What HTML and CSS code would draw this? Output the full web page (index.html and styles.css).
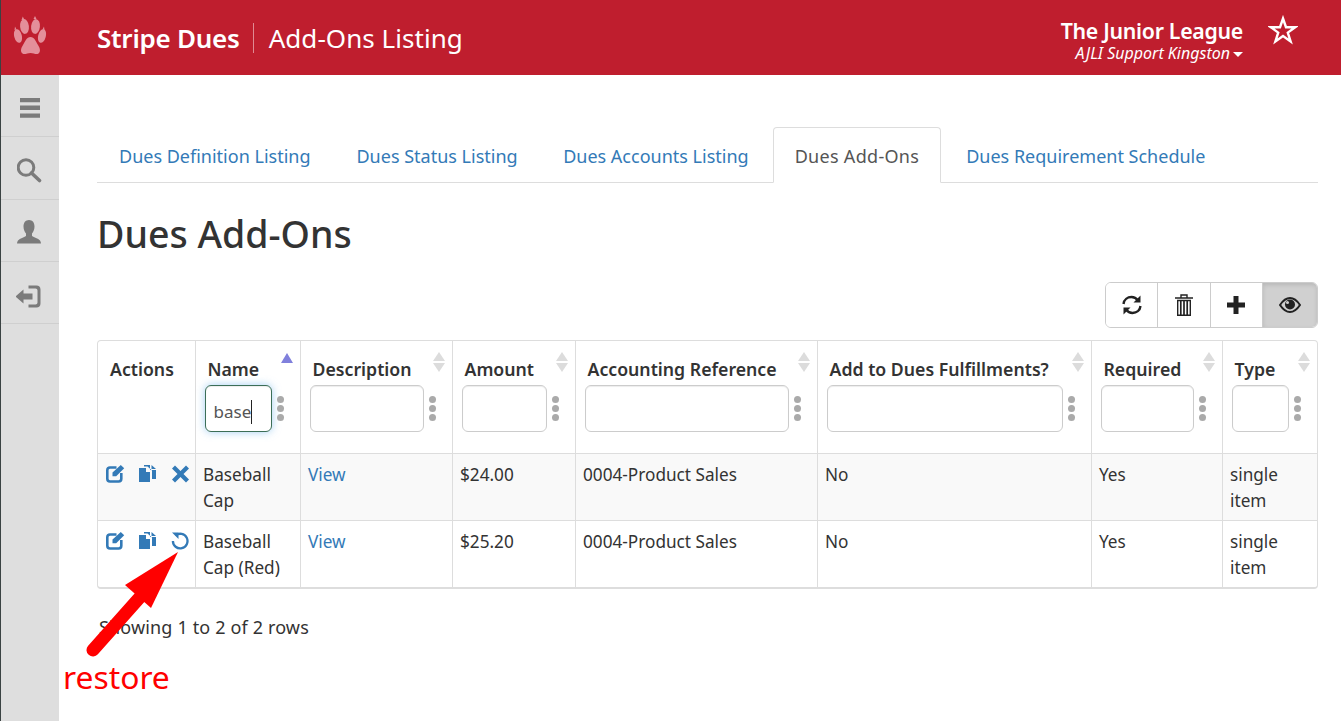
FILE: index.html
```html
<!DOCTYPE html>
<html lang="en">
<head>
<meta charset="utf-8">
<title>Dues Add-Ons</title>
<link rel="stylesheet" href="styles.css">
</head>
<body>
<header class="topbar">
  <div class="paw">
    <svg width="34" height="40" viewBox="0 0 34 40"><g fill="#e48f9a">
      <path d="M17.500 22c-4 0-5 4-7.500 8-2 3-3 6.500-.5 8.500 2 1.500 5-.5 8-.5s6 2 8 .5c2.500-2 1.500-5.500-.5-8.500-2.500-4-3.500-8-7.500-8z"/>
      <ellipse cx="11.500" cy="11.500" rx="4.400" ry="7.400" transform="rotate(-6 11.500 11.500)"/>
      <ellipse cx="22.500" cy="11.500" rx="4.400" ry="7.400" transform="rotate(6 22.500 11.500)"/>
      <ellipse cx="5" cy="21" rx="3.800" ry="7" transform="rotate(-14 5 21)"/>
      <ellipse cx="29" cy="21" rx="3.800" ry="7" transform="rotate(14 29 21)"/>
      <path d="M8.500 5l1.300-3.500 1.700 3.500zM20.500 4l1.500-3 1.500 3zM1.500 15l.5-3.500 1.500 3zM29.500 14.500l1.500-3 .5 3.500z"/>
    </g></svg>
  </div>
  <div class="brand">Stripe Dues</div>
  <div class="page-title">Add-Ons Listing</div>
  <div class="org">
    <div class="org-name">The Junior League</div>
    <div class="org-sub">AJLI Support Kingston<span class="caret"></span></div>
  </div>
  <svg class="star" width="30" height="30" viewBox="0 0 30 30"><path d="M15 3.500l3 8.700h9.200l-7.400 5.400 2.800 8.800-7.600-5.400-7.600 5.400 2.800-8.800-7.400-5.400H12z" fill="none" stroke="#fff" stroke-width="2.400" stroke-linejoin="miter"/></svg>
</header>
<div class="shell">
  <nav class="side">
    <div class="side-item"><svg width="22" height="22" viewBox="0 0 22 22" fill="#7b7b7b"><path d="M1 1h20v4.200H1zM1 8.500h20v4.500H1zM1 16.500h20v4.300H1z"/></svg></div>
    <div class="side-item"><svg width="26" height="26" viewBox="1.500 0 26 26"><circle cx="10.500" cy="10.500" r="7.800" fill="none" stroke="#7b7b7b" stroke-width="3"/><path d="M16 16l8 7.500" stroke="#7b7b7b" stroke-width="3.600" stroke-linecap="round"/></svg></div>
    <div class="side-item"><svg width="26" height="26" viewBox="1 0 26 26" fill="#7b7b7b"><path d="M13 1c3.500 0 5.500 2.800 5.500 6.500 0 3-1.200 5.500-2.500 7v2.500c2 1.500 6 2 8 4.500 .7 1 .9 2 1 3H1c.1-1 .3-2 1-3 2-2.500 6-3 8-4.500v-2.500c-1.300-1.500-2.500-4-2.500-7C7.500 3.800 9.500 1 13 1z"/></svg></div>
    <div class="side-item"><svg width="28" height="26" viewBox="1.500 -1.500 28 26" fill="#7b7b7b"><path d="M1 13l8-7v4h9v6H9v4z"/><path d="M14 2h8c2.500 0 4 1.500 4 4v14c0 2.500-1.500 4-4 4h-8v-3h7c1 0 2-.7 2-2V7c0-1.300-1-2-2-2h-7z"/></svg></div>
  </nav>
  <main class="content">
    <ul class="tabs">
      <li class="tab"><a href="#">Dues Definition Listing</a></li>
      <li class="tab"><a href="#">Dues Status Listing</a></li>
      <li class="tab"><a href="#">Dues Accounts Listing</a></li>
      <li class="tab active"><a href="#">Dues Add-Ons</a></li>
      <li class="tab"><a href="#">Dues Requirement Schedule</a></li>
    </ul>
    <h1 class="heading">Dues Add-Ons</h1>
    <div class="toolbar">
      <div class="btn-group">
        <button class="btn"><svg width="22" height="22" viewBox="0 0 22 22" fill="none" stroke="#222" stroke-width="2.400"><path d="M2.500 10c.5-4.500 4-7 8-7 2.500 0 4.800 1.200 6.500 3.500"/><path d="M19.500 12c-.5 4.500-4 7-8 7-2.500 0-4.800-1.200-6.500-3.500"/><path d="M19.500 1.500v7h-7z" fill="#222" stroke="none"/><path d="M2.500 20.500v-7h7z" fill="#222" stroke="none"/></svg></button>
        <button class="btn"><svg width="20" height="24" viewBox="0 0 20 24" fill="none" stroke="#222"><path d="M1 5h18M7 4.500V2h6v2.500" stroke-width="1.400"/><path d="M3.700 7.500h12.600v14.800H3.700z" stroke-width="1.400"/><path d="M6.800 8v14M10 8v14M13.200 8v14" stroke-width="1.700"/></svg></button>
        <button class="btn"><svg width="20" height="20" viewBox="0 0 20 20" fill="#222"><path d="M7.500 1h5v6.500H19v5h-6.500V19h-5v-6.500H1v-5h6.500z"/></svg></button>
        <button class="btn on"><svg width="22" height="16" viewBox="0 0 22 16"><path d="M1 8c3-4.500 6-7 10-7s7 2.500 10 7c-3 4.500-6 7-10 7S4 12.500 1 8z" fill="none" stroke="#222" stroke-width="2"/><circle cx="11" cy="7.500" r="5" fill="#222"/><circle cx="8.500" cy="5.500" r="1.500" fill="#d0d0d0"/></svg></button>
      </div>
    </div>
    <div class="table-wrap">
      <table class="grid">
        <colgroup>
          <col class="c1"><col class="c2"><col class="c3"><col class="c4"><col class="c5"><col class="c6"><col class="c7"><col class="c8">
        </colgroup>
        <thead>
          <tr>
            <th class="th-actions"><div class="th-label">Actions</div></th>
            <th><span class="sort-up"></span><div class="th-label">Name</div><div class="filter"><div class="field focused">base<span class="cursor"></span></div><span class="dots"><i></i><i></i><i></i></span></div></th>
            <th><span class="sort"></span><div class="th-label">Description</div><div class="filter"><div class="field"></div><span class="dots"><i></i><i></i><i></i></span></div></th>
            <th><span class="sort"></span><div class="th-label">Amount</div><div class="filter"><div class="field"></div><span class="dots"><i></i><i></i><i></i></span></div></th>
            <th><span class="sort"></span><div class="th-label">Accounting Reference</div><div class="filter"><div class="field"></div><span class="dots"><i></i><i></i><i></i></span></div></th>
            <th><span class="sort"></span><div class="th-label">Add to Dues Fulfillments?</div><div class="filter"><div class="field"></div><span class="dots"><i></i><i></i><i></i></span></div></th>
            <th><span class="sort"></span><div class="th-label">Required</div><div class="filter"><div class="field"></div><span class="dots"><i></i><i></i><i></i></span></div></th>
            <th><span class="sort"></span><div class="th-label">Type</div><div class="filter"><div class="field"></div><span class="dots"><i></i><i></i><i></i></span></div></th>
          </tr>
        </thead>
        <tbody>
          <tr class="odd">
            <td><div class="acts">
              <svg class="ic" width="19" height="19" viewBox="0 0 19 19"><path d="M10.500 3.500H4C2.300 3.500 1.300 4.500 1.300 6.200v8.600c0 1.700 1 2.700 2.700 2.700h8.600c1.700 0 2.700-1 2.700-2.700V9" fill="none" stroke="#337ab7" stroke-width="2.600"/><path d="M6.500 8.500L14.800 1l3.400 3.200-8 8H6.500z" fill="#337ab7"/></svg>
              <svg class="ic" width="19" height="19" viewBox="0 0 19 19" fill="#337ab7"><path d="M1 4h7v4h4v10H1z"/><path d="M6 1h6v5h6v9h-4V6.500L9.500 2.500H6z"/><path d="M13.500 1l4.500 4h-4.500z"/></svg>
              <svg class="ic" width="19" height="19" viewBox="0 0 19 19" fill="#337ab7"><path d="M5 1.500L10.500 7 16 1.500 19 4.500 13.500 10 19 15.500 16 18.500 10.500 13 5 18.500 2 15.500 7.500 10 2 4.500z"/></svg>
            </div></td>
            <td>Baseball Cap</td><td><a href="#">View</a></td><td>$24.00</td><td>0004-Product Sales</td><td>No</td><td>Yes</td><td>single item</td>
          </tr>
          <tr>
            <td><div class="acts">
              <svg class="ic" width="19" height="19" viewBox="0 0 19 19"><path d="M10.500 3.500H4C2.300 3.500 1.300 4.500 1.300 6.200v8.600c0 1.700 1 2.700 2.700 2.700h8.600c1.700 0 2.700-1 2.700-2.700V9" fill="none" stroke="#337ab7" stroke-width="2.600"/><path d="M6.500 8.500L14.800 1l3.400 3.200-8 8H6.500z" fill="#337ab7"/></svg>
              <svg class="ic" width="19" height="19" viewBox="0 0 19 19" fill="#337ab7"><path d="M1 4h7v4h4v10H1z"/><path d="M6 1h6v5h6v9h-4V6.500L9.500 2.500H6z"/><path d="M13.500 1l4.500 4h-4.500z"/></svg>
              <svg class="ic" width="19" height="19" viewBox="0 0 19 19"><path d="M5.500 4.500A7.300 7.300 0 1 1 2.900 10" fill="none" stroke="#337ab7" stroke-width="2.300"/><path d="M2 1.500h6.500v6.500z" fill="#337ab7"/></svg>
            </div></td>
            <td>Baseball Cap (Red)</td><td><a href="#">View</a></td><td>$25.20</td><td>0004-Product Sales</td><td>No</td><td>Yes</td><td>single item</td>
          </tr>
        </tbody>
      </table>
    </div>
    <p class="summary">Showing 1 to 2 of 2 rows</p>
  </main>
</div>
<svg class="arrow" width="110" height="110" viewBox="0 0 110 110"><path d="M12 101L60 47" stroke="#f00" stroke-width="13" stroke-linecap="round"/><path d="M97 3L44 36 70 59z" fill="#f00"/></svg>
<div class="note">restore</div>
</body>
</html>
```
FILE: styles.css
```css
* { box-sizing: border-box; }
html, body { margin: 0; height: 100%; overflow: hidden; }
body {
  font-family: "Noto Sans", "Open Sans", sans-serif;
  font-size: 17px;
  color: #333;
  background: #fff;
  border-left: 1px solid #3a4242;
  display: flex;
  flex-direction: column;
  position: relative;
}
a { color: #337ab7; text-decoration: none; }

.topbar {
  height: 75px;
  flex: none;
  background: #bf1e2e;
  color: #fff;
  display: flex;
  align-items: center;
}
.paw { width: 96px; padding-left: 12px; display: flex; }
.paw svg { margin-top: -6px; }
.brand { font-size: 26px; font-weight: 600; padding-right: 13px; letter-spacing: -.25px; }
.page-title {
  font-size: 26px;
  border-left: 1px solid #e08a93;
  padding-left: 15px;
  line-height: 30px;
  letter-spacing: .05px;
}
.org { margin-left: auto; text-align: right; margin-top: 5px; width: 200px; padding-right: 8px; }
.org-name { font-size: 21.300px; font-weight: 600; line-height: 27px; white-space: nowrap; letter-spacing: -.3px; }
.org-sub { font-size: 16px; font-style: italic; line-height: 19px; white-space: nowrap; }
.caret {
  display: inline-block;
  margin-left: 3px;
  vertical-align: 2px;
  border-top: 5px solid #fff;
  border-left: 5px solid transparent;
  border-right: 5px solid transparent;
}
.star { margin: -16px 43px 0 17px; flex: none; }

.shell { flex: 1; display: flex; min-height: 0; }
.side { width: 58px; flex: none; background: #dedede; }
.side-item {
  height: 62.300px;
  padding-top: 4px;
  border-bottom: 1px solid #cfcfcf;
  display: flex;
  align-items: center;
  justify-content: center;
}
.content { flex: 1; padding: 52px 23px 0 38px; min-width: 0; }

.tabs {
  list-style: none;
  margin: 0;
  padding: 0;
  display: flex;
  height: 56px;
  border-bottom: 1px solid #ddd;
}
.tab { height: 56px; padding: 1px 23px 0; display: flex; align-items: center; font-size: 18px; white-space: nowrap; }
.tab:first-child { padding-left: 22px; }
.tab:nth-child(3) { padding-left: 22.500px; padding-right: 24px; }
.tab.active {
  background: #fff;
  border: 1px solid #ddd;
  border-bottom-color: #fff;
  border-radius: 4px 4px 0 0;
  padding: 1px 21px 0;
  margin-right: 2px;
  letter-spacing: .3px;
}
.tab.active a { color: #555; }

.heading { font-size: 37.500px; font-weight: 500; margin: 26px 0 0; line-height: 50px; }

.toolbar { display: flex; justify-content: flex-end; margin-top: 23px; }
.btn-group { display: flex; width: 213px; height: 46px; border: 1px solid #ccc; border-radius: 6px; overflow: hidden; }
.btn {
  flex: none;
  width: 52.400px;
  border: 0;
  border-right: 1px solid #ccc;
  background: #fff;
  padding: 0;
  display: flex;
  align-items: center;
  justify-content: center;
}
.btn:last-child { border-right: 0; flex: 1; }
.btn.on { background: #d0d0d0; box-shadow: inset 0 2px 4px rgba(0,0,0,.12); }

.table-wrap {
  margin-top: 12px;
  border: 1px solid #ddd;
  border-bottom-width: 2px;
  border-radius: 4px;
  overflow: hidden;
}
.grid { width: 100%; border-collapse: collapse; table-layout: fixed; font-size: 17.200px; }
.c1 { width: 97px; } .c2 { width: 105px; } .c3 { width: 152px; } .c4 { width: 123px; }
.c5 { width: 242px; } .c6 { width: 274px; } .c7 { width: 131px; } .c8 { width: 95px; }
th {
  position: relative;
  height: 112px;
  padding: 15px 15px 0 9px;
  vertical-align: top;
  text-align: left;
  border-left: 1px solid #ddd;
  border-bottom: 1px solid #ddd;
}
th:first-child, td:first-child { border-left: 0; }
.th-label { font-weight: 600; font-size: 17.700px; line-height: 26px; padding-left: 3px; white-space: nowrap; }
.filter { display: flex; align-items: center; gap: 5px; margin-top: 3px; }
.field {
  flex: 1;
  height: 47px;
  min-width: 0;
  border: 1px solid #ccc;
  border-radius: 6px;
  background: #fff;
  box-shadow: inset 0 1px 1px rgba(0,0,0,.075);
  padding: 0 8px;
  font-weight: 400;
  font-size: 17px;
  line-height: 51px;
  color: #555;
}
.field.focused {
  border-color: #3c6e57;
  box-shadow: inset 0 1px 1px rgba(0,0,0,.075), 0 0 8px rgba(102,175,233,.6);
}
.cursor { display: inline-block; width: 1px; height: 24px; background: #222; vertical-align: -6px; }
.dots { width: 8px; flex: none; display: flex; flex-direction: column; gap: 2px; }
.dots i { display: block; width: 7px; height: 7px; border-radius: 50%; background: #aaa; }
.sort, .sort-up { position: absolute; top: 11px; right: 7px; width: 12px; height: 22px; }
.sort::before, .sort::after, .sort-up::before { content: ""; position: absolute; left: 0; border-left: 6px solid transparent; border-right: 6px solid transparent; }
.sort::before { top: 0; border-bottom: 9px solid #dcdcdc; }
.sort::after { top: 11px; border-top: 9px solid #dcdcdc; }
.sort-up::before { top: 1px; border-bottom: 10px solid #8080dc; }
td {
  padding: 8px 7px 6px 7.500px;
  line-height: 26px;
  vertical-align: top;
  border-left: 1px solid #ddd;
  border-bottom: 1px solid #ddd;
}
tbody tr:last-child td { border-bottom: 0; }
.odd td { background: #f9f9f9; }
.acts { padding-top: 2px; display: flex; gap: 13px; }
.ic { flex: none; }

.summary { margin: 25px 0 0 2px; line-height: 26px; font-size: 18px; letter-spacing: .15px; }

.arrow { position: absolute; left: 80px; top: 549px; }
.note { position: absolute; left: 62px; top: 656px; font-size: 31.800px; line-height: 42px; color: #f00; }
```
